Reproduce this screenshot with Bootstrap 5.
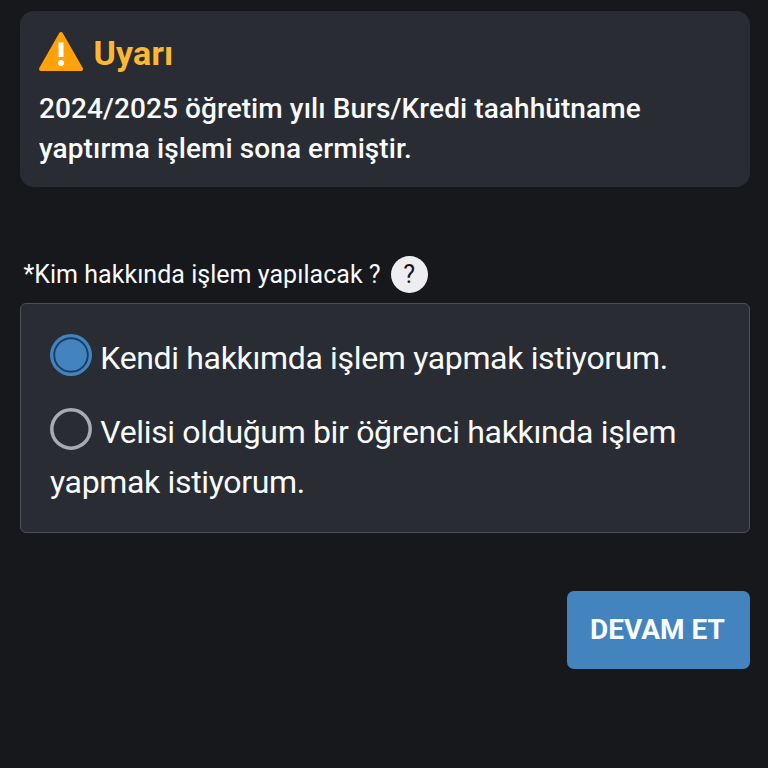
<!DOCTYPE html>
<html lang="tr" data-bs-theme="dark">
<head>
<meta charset="utf-8">
<meta name="viewport" content="width=device-width, initial-scale=1">
<title>Uyarı</title>
<link href="https://cdn.jsdelivr.net/npm/bootstrap@5.3.0/dist/css/bootstrap.min.css" rel="stylesheet">
<style>
body{background:#16181b;color:#f8fafc;font-family:Roboto,sans-serif;height:768px;overflow:hidden}
.page{padding:11px 18.5px 0 20px}
.notice{background:#292d33;border-radius:14px;height:176px;padding:20px 19px}
.notice-title{color:#fdb833;font-size:34px;font-weight:700;line-height:44px;letter-spacing:.15px}
.notice-title span{margin-left:10.5px}
.notice-text{font-size:28px;font-weight:500;line-height:40px;margin-top:14px;letter-spacing:.08px}
.question{margin-top:69px;padding-left:3.5px;height:37px;font-size:25px;line-height:37px;letter-spacing:.03px}
.help{width:37px;height:37px;background:#eeeef0;color:#16181b;margin-left:10px}
.choices{margin-top:10px;height:230px;background:#292d33;border:1.5px solid #4d5157;border-radius:6px;padding:29px}
.choice{font-size:32px;line-height:50px;letter-spacing:-.34px}
.radio-icon{vertical-align:-7px;margin-right:8.3px}
.go{background:#4384bf;width:182.5px;height:78px;border-radius:7px;font-size:28px;font-weight:700;color:#f8fcff;margin-top:58px;padding:0 1.5px 0 0}
</style>
</head>
<body>
<main class="page">
<section class="notice">
<div class="notice-title d-flex align-items-center"><svg width="44" height="44" viewBox="0 0 44 44"><path d="M22 3 42 38H2Z" fill="#ffa20a" stroke="#ffa20a" stroke-width="4" stroke-linejoin="round"/><path d="M22 11.5v14.5" stroke="#fff" stroke-width="5"/><circle cx="22" cy="32" r="3" fill="#fff"/></svg><span>Uyarı</span></div>
<p class="notice-text mb-0">2024/2025 öğretim yılı Burs/Kredi taahhütname<br>yaptırma işlemi sona ermiştir.</p>
</section>
<div class="question d-flex"><span>*Kim hakkında işlem yapılacak ?</span><span class="help rounded-circle text-center">?</span></div>
<section class="choices">
<div class="choice"><svg class="radio-icon" width="42" height="42"><circle cx="21" cy="21" r="21" fill="#4384bf"/><circle cx="21" cy="21" r="16.8" fill="#4384bf" stroke="#173f65" stroke-width="1.9"/></svg>Kendi hakkımda işlem yapmak istiyorum.</div>
<div class="choice mt-4"><svg class="radio-icon" width="42" height="42"><circle cx="21" cy="21" r="19.2" fill="none" stroke="#a9abae" stroke-width="3.5"/></svg>Velisi olduğum bir öğrenci hakkında işlem<br>yapmak istiyorum.</div>
</section>
<div class="d-flex justify-content-end"><button class="btn go">DEVAM ET</button></div>
</main>
<script src="https://cdn.jsdelivr.net/npm/bootstrap@5.3.0/dist/js/bootstrap.bundle.min.js"></script>
</body>
</html>
